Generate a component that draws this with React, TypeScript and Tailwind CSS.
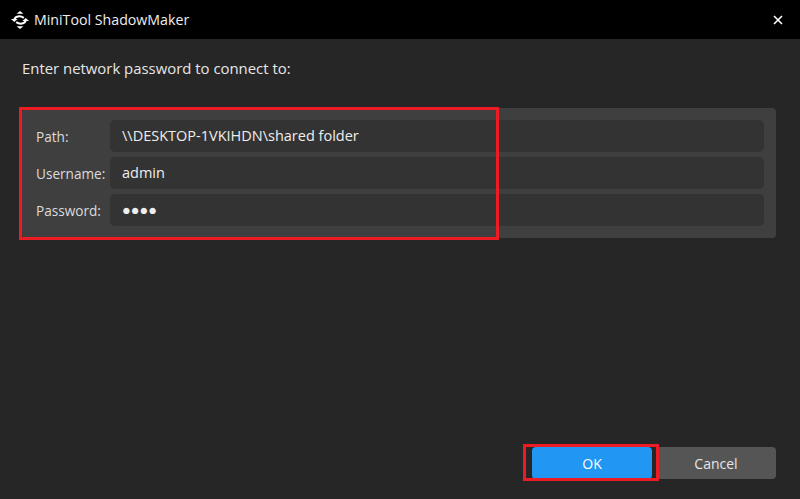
const rows = [
  { label: 'Path:', value: '\\\\DESKTOP-1VKIHDN\\shared folder' },
  { label: 'Username:', value: 'admin' },
  { label: 'Password:', value: '●●●●' },
];

function Logo() {
  return (
    <svg width="18" height="18" viewBox="0 0 18 18" fill="none" className="shrink-0">
      <path d="M9 0 L12.4 2.8 H5.6 Z" fill="#fff" />
      <path d="M9 18 L12.4 15.2 H5.6 Z" fill="#fff" />
      <path d="M3.4 8.5 C4 5.2 9 4.2 12.8 6.8" stroke="#fff" strokeWidth="2" />
      <path d="M14.6 9.5 C14 12.8 9 13.8 5.2 11.2" stroke="#fff" strokeWidth="2" />
      <path d="M0 8 H6.6 L3.3 11 Z" fill="#fff" />
      <path d="M18 10 H11.4 L14.7 7 Z" fill="#fff" />
    </svg>
  );
}

export default function App() {
  return (
    <div className="relative w-[800px] h-[499px] overflow-hidden bg-[#262626] text-[#e6e6e6] text-[14px] font-['Open_Sans','Noto_Sans',sans-serif]">
      <div className="flex items-center h-[39px] bg-black pl-[11px] pr-[17px]">
        <Logo />
        <span className="ml-[5px] text-[14.2px] text-[#eeeeee]">MiniTool ShadowMaker</span>
        <svg width="10" height="10" viewBox="0 0 10 10" className="ml-auto">
          <path d="M1 1 L9 9 M9 1 L1 9" stroke="#fff" strokeWidth="1.6" />
        </svg>
      </div>

      <p className="pl-[22px] pt-[19px] h-[69px] text-[14.9px] leading-[20px]">Enter network password to connect to:</p>

      <div className="flex flex-col gap-[5px] mr-[24px] ml-[22px] py-[12px] pl-[14px] pr-[12px] rounded-[4px] bg-[#3f3f3f]">
        {rows.map(row => (
          <div key={row.label} className="flex items-center">
            <span className="w-[74px] pt-[2px] text-[13.6px] text-[#dcdcdc]">{row.label}</span>
            <div className="flex-1 h-[32px] flex items-center px-[12px] rounded-[5px] bg-[#333333] text-[14.5px] text-[#eeeeee]">{row.value}</div>
          </div>
        ))}
      </div>

      <div className="absolute right-[24px] bottom-[20px] flex gap-[4px]">
        <button className="w-[120px] h-[32px] rounded-[4px] bg-[#2196f3] text-white">OK</button>
        <button className="w-[120px] h-[32px] rounded-[4px] bg-[#555555] text-[#e6e6e6]">Cancel</button>
      </div>

      {/* red annotation boxes drawn over the screenshot */}
      <div className="absolute left-[19px] top-[107px] w-[480px] h-[133px] border-[3px] border-[#ed1c24]" />
      <div className="absolute left-[523px] top-[444px] w-[136px] h-[37px] border-[3px] border-[#ed1c24]" />
    </div>
  );
}
